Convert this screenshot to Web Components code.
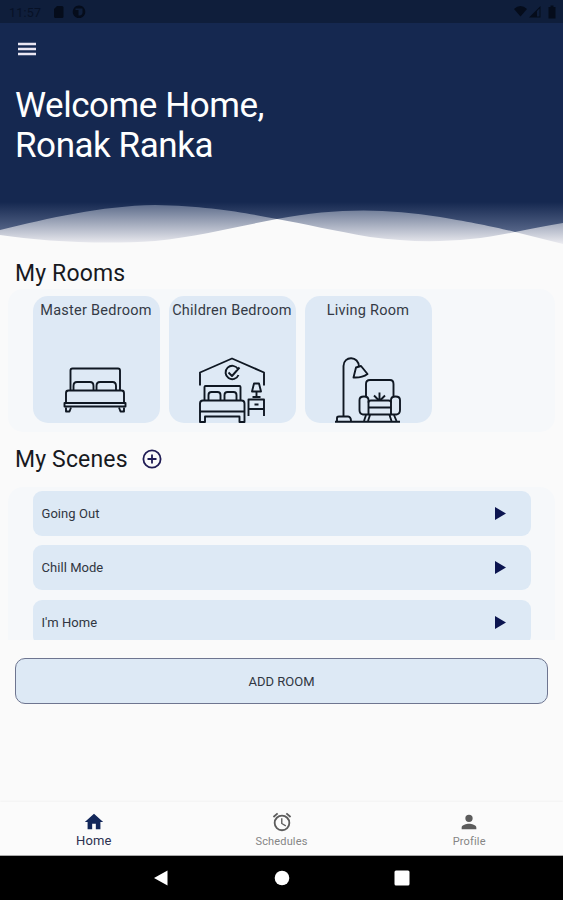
<!DOCTYPE html>
<html lang="en">
<head>
<meta charset="utf-8">
<title>Smart Home</title>
<style>
  body {
    margin: 0;
    font-family: Roboto, "Liberation Sans", sans-serif;
    color: #17191e;
    background: #fafafa;
  }
</style>
</head>
<body>
<home-screen></home-screen>

<script>
class StatusBar extends HTMLElement {
  connectedCallback() {
    this.attachShadow({ mode: 'open' });
    this.shadowRoot.innerHTML = `
      <style>
        :host {
          display: flex;
          align-items: center;
          box-sizing: border-box;
          height: 23px;
          padding: 1px 7px 0 9px;
          background: #0f1e3b;
          color: #071126;
          font-size: 12.5px;
          letter-spacing: 0.2px;
        }
        svg { display: block; fill: #050c1b; }
        .time { width: 44px; }
        .right { margin-left: auto; }
      </style>
      <span class="time">11:57</span>
      <svg width="34" height="14" viewBox="0 0 34 14">
        <path d="M4 1h5q1.500 0 1.500 1.500v9q0 1.500-1.500 1.500H2.500Q1 13 1 11.500V4z"/>
        <path fill-rule="evenodd" d="M26 .5a6.300 6.300 0 1 0 .01 0zM22.500 3.500h7v3.500a3 3 0 0 1-3 3.500h-1V5h-3z"/>
      </svg>
      <svg class="right" width="42" height="14" viewBox="0 0 42 14">
        <path d="M0 4Q6.500-2 13 4L6.500 11.500z"/>
        <path d="M15 12.500L26.500 1v11.500zM23 6v5.500h2.500V3.500z" fill-rule="evenodd"/>
        <path d="M34.500 2h2V.5h3V2h2v11.500h-7z"/>
      </svg>
    `;
  }
}
customElements.define('status-bar', StatusBar);

class WelcomeHeader extends HTMLElement {
  connectedCallback() {
    this.attachShadow({ mode: 'open' });
    this.shadowRoot.innerHTML = `
      <style>
        :host {
          display: flex;
          flex-direction: column;
          height: 227px;
          background: #152850;
          color: #fff;
        }
        .menu { display: block; margin: 19px 0 0 18px; }
        h1 {
          margin: 30px 0 0 15px;
          font-size: 35px;
          line-height: 40px;
          font-weight: 400;
          letter-spacing: -0.45px;
        }
        .wave { display: block; margin-top: auto; }
      </style>
      <svg class="menu" width="18" height="14" viewBox="0 0 18 14" fill="#e9e6f2">
        <path d="M0 .7h18v2.600H0zM0 5.700h18v2.600H0zM0 10.700h18v2.600H0z"/>
      </svg>
      <h1><slot></slot></h1>
      <svg class="wave" width="563" height="55" viewBox="0 195 563 55">
        <defs>
          <linearGradient id="deep" gradientUnits="userSpaceOnUse" x1="0" y1="202" x2="0" y2="236">
            <stop offset="0" stop-color="#152850"/>
            <stop offset="1" stop-color="#5f6e90"/>
          </linearGradient>
          <linearGradient id="mist" gradientUnits="userSpaceOnUse" x1="0" y1="204" x2="0" y2="244">
            <stop offset="0" stop-color="#5c6b8a"/>
            <stop offset="1" stop-color="#ececf1"/>
          </linearGradient>
        </defs>
        <rect y="195" width="563" height="55" fill="#fafafa"/>
        <path fill="url(#mist)" d="M0 195H563V223C540 227 528 229 515 232C470 242 420 244 370 237C335 231 305 224 277 219C235 227 200 236 155 241C100 245 40 241 0 235z"/>
        <path fill="url(#mist)" d="M277 219C335 208 385 208 440 217C475 223 495 227 515 232L563 244V195H277z"/>
        <path fill="url(#deep)" d="M0 195H563V223C545 226 530 229 515 232C495 227 475 223 440 217C385 208 335 208 277 219C245 213 210 206 155 205C100 206 50 218 0 230z"/>
      </svg>
    `;
  }
}
customElements.define('welcome-header', WelcomeHeader);

class SectionTitle extends HTMLElement {
  connectedCallback() {
    this.attachShadow({ mode: 'open' });
    this.shadowRoot.innerHTML = `
      <style>
        :host {
          display: flex;
          align-items: center;
          gap: 14px;
          height: 30px;
          padding-left: 15px;
        }
        h2 {
          margin: 0;
          padding-top: 2px;
          font-size: 23px;
          font-weight: 400;
          line-height: 28px;
          letter-spacing: 0.15px;
        }
      </style>
      <h2><slot></slot></h2>
      <slot name="action"></slot>
    `;
  }
}
customElements.define('section-title', SectionTitle);

class AddButton extends HTMLElement {
  connectedCallback() {
    this.attachShadow({ mode: 'open' });
    this.shadowRoot.innerHTML = `
      <style>
        :host { display: block; }
        svg { display: block; }
      </style>
      <svg width="20" height="20" viewBox="0 0 20 20" fill="none" stroke="#201c55" stroke-width="1.800">
        <circle cx="10" cy="10" r="8.600"/>
        <path d="M10 5.500v9M5.500 10h9"/>
      </svg>
    `;
  }
}
customElements.define('add-button', AddButton);

const ROOM_ICONS = {
  bed: `
    <path d="M7.500 33V13.500Q7.500 11.500 9.500 11.500H55Q57 11.500 57 13.500V33"/>
    <path d="M10.500 33V29Q10.500 25 14 25H27Q30.500 25 30.500 29V33M33.500 33V29Q33.500 25 37 25H49.500Q53 25 53 29V33"/>
    <path d="M3 46V36Q3 33.500 5.500 33.500H58.500Q61 33.500 61 36V46M1.500 46H62.500V49.500H1.500z"/>
    <path d="M3 50.500V54.500H6.500L8 50.500M61 50.500V54.500H57.500L56 50.500"/>`,
  kids: `
    <path d="M1 28.500V15.500L33 1.500L65 15.500V28.500"/>
    <path d="M39 12A6.700 6.700 0 1 0 39.500 18M29.500 15.500L33 19L40.500 10.500"/>
    <path d="M5.500 44V30Q5.500 29 6.500 29H40.500Q41.500 29 41.500 30V44"/>
    <path d="M9.500 43V38Q9.500 35 12.500 35H18.500Q21.500 35 21.500 38V43M25.500 43V38Q25.500 35 28.500 35H34.500Q37.500 35 37.500 38V43"/>
    <path d="M1 65V46.500Q1 43.500 4 43.500H42.500Q45.500 43.500 45.500 46.500V65H40.500V59.500H6V65zM1 54.500H45.500"/>
    <path d="M55 26.500H60L62 34.500H53zM57.500 34.500V40M53.500 40H61.500"/>
    <path d="M49.500 59V42.500H65V59M49.500 52H65M55.500 47.500H59.500"/>`,
  living: `
    <path d="M8.500 60V9C8.500-1.500 24-1.500 24 10"/>
    <path d="M21 10.500L26 9L32.500 17Q27 21 18.500 20.500z"/>
    <path d="M2 64V61Q2 59.500 4 59.500H13Q16 60 16 64M0 64.800H65"/>
    <path d="M31 39V27Q31 23 35 23H55Q58.500 23 58.500 27V39"/>
    <path d="M33.500 57.500V43Q33.500 39.500 29 39.500Q24.500 39.500 24.500 43V53Q24.500 57 28 57.500zM56 57.500V43Q56 39.500 60.500 39.500Q65 39.500 65 43V53Q65 57 61.500 57.500z"/>
    <path d="M33.500 45.500Q33.500 43.500 36 43.500H53.500Q56 43.500 56 45.500M33.500 50.500H56M33.500 57.500H56M31 58L29 64M35 58L33 64M54.500 58L56.500 64M59 58L61.500 64"/>
    <path d="M44.500 43V35.500M43.500 43L39 38.500M45.500 43L50 38.500"/>`
};

class RoomCard extends HTMLElement {
  connectedCallback() {
    this.attachShadow({ mode: 'open' });
    this.shadowRoot.innerHTML = `
      <style>
        :host {
          display: flex;
          flex-direction: column;
          align-items: center;
          justify-content: space-between;
          width: 127px;
          height: 127px;
          border-radius: 15px;
          background: #dee9f5;
          overflow: hidden;
        }
        .name {
          margin-top: 6px;
          font-size: 14.500px;
          line-height: 18px;
          letter-spacing: 0.25px;
          white-space: nowrap;
          color: #343a45;
        }
        svg { display: block; margin-right: 1px; }
      </style>
      <span class="name"><slot></slot></span>
      <svg width="66" height="66" viewBox="0 0 66 66" fill="none" stroke="#0f1722" stroke-width="1.900" stroke-linejoin="round">
        ${ROOM_ICONS[this.getAttribute('icon')]}
      </svg>
    `;
  }
}
customElements.define('room-card', RoomCard);

class RoomList extends HTMLElement {
  connectedCallback() {
    this.attachShadow({ mode: 'open' });
    this.shadowRoot.innerHTML = `
      <style>
        :host {
          display: flex;
          gap: 9px;
          box-sizing: border-box;
          height: 143px;
          margin: 1px 8px 0;
          padding: 7px 25px 9px 24.500px;
          border-radius: 15px;
          background: #f6f8fa;
        }
      </style>
      <slot></slot>
    `;
  }
}
customElements.define('room-list', RoomList);

class SceneRow extends HTMLElement {
  connectedCallback() {
    this.attachShadow({ mode: 'open' });
    this.shadowRoot.innerHTML = `
      <style>
        :host {
          display: flex;
          flex: none;
          align-items: center;
          justify-content: space-between;
          box-sizing: border-box;
          height: 45px;
          padding: 0 25px 0 9px;
          border-radius: 9px;
          background: #dde9f5;
          color: #303641;
          font-size: 13px;
          letter-spacing: 0.05px;
        }
        svg { display: block; }
      </style>
      <slot></slot>
      <svg width="11" height="13" viewBox="0 0 11 13"><path fill="#0c1550" d="M0 0L11 6.500L0 13z"/></svg>
    `;
  }
}
customElements.define('scene-row', SceneRow);

class SceneList extends HTMLElement {
  connectedCallback() {
    this.attachShadow({ mode: 'open' });
    this.shadowRoot.innerHTML = `
      <style>
        :host {
          display: flex;
          flex-direction: column;
          gap: 9.400px;
          box-sizing: border-box;
          height: 153px;
          margin: 13px 8px 0;
          padding: 4px 24.500px 0;
          border-radius: 15px 15px 0 0;
          background: #f6f8fa;
          overflow: hidden;
        }
      </style>
      <slot></slot>
    `;
  }
}
customElements.define('scene-list', SceneList);

class OutlineButton extends HTMLElement {
  connectedCallback() {
    this.attachShadow({ mode: 'open' });
    this.shadowRoot.innerHTML = `
      <style>
        :host { display: block; margin: 18px 15px 0; }
        button {
          display: block;
          width: 100%;
          height: 46px;
          padding: 0;
          border: 1px solid #6e7590;
          border-radius: 10px;
          background: #dde9f5;
          color: #303641;
          font: 400 13px Roboto, "Liberation Sans", sans-serif;
        }
      </style>
      <button><slot></slot></button>
    `;
  }
}
customElements.define('outline-button', OutlineButton);

const TAB_ICONS = {
  home: '<path d="M10 20v-6h4v6h5v-8h3L12 3 2 12h3v8z"/>',
  alarm: '<path d="M22 5.720l-4.600-3.860-1.290 1.530 4.600 3.860L22 5.720zM7.880 3.390L6.600 1.860 2 5.710l1.290 1.530 4.590-3.850zM12.500 8H11v6l4.750 2.850.75-1.230-4-2.370V8zM12 4a9 9 0 1 0 0 18 9 9 0 0 0 0-18zm0 16a7 7 0 1 1 0-14 7 7 0 0 1 0 14z"/>',
  person: '<path d="M12 12a4 4 0 1 0 0-8 4 4 0 0 0 0 8zm0 2c-2.670 0-8 1.340-8 4v2h16v-2c0-2.660-5.330-4-8-4z"/>'
};

class TabItem extends HTMLElement {
  connectedCallback() {
    this.attachShadow({ mode: 'open' });
    this.shadowRoot.innerHTML = `
      <style>
        :host {
          display: flex;
          flex: 1;
          flex-direction: column;
          align-items: center;
          padding-top: 9px;
          color: #858585;
          font-size: 11px;
          line-height: 17px;
        }
        :host([active]) { color: #2c3150; font-size: 13px; }
        svg { display: block; fill: #5c5c5c; }
        :host([active]) svg { fill: #13275a; }
        span { letter-spacing: 0.15px; }
        :host([active]) span { margin-top: -1px; }
      </style>
      <svg width="22" height="22" viewBox="0 0 24 24">${TAB_ICONS[this.getAttribute('icon')]}</svg>
      <span><slot></slot></span>
    `;
  }
}
customElements.define('tab-item', TabItem);

class TabBar extends HTMLElement {
  connectedCallback() {
    this.attachShadow({ mode: 'open' });
    this.shadowRoot.innerHTML = `
      <style>
        :host {
          display: flex;
          box-sizing: border-box;
          height: 54px;
          margin-top: auto;
          border-bottom: 1px solid #aaa;
          background: #fbfbfb;
          box-shadow: 0 -1px 2px rgba(0, 0, 0, 0.03);
        }
      </style>
      <slot></slot>
    `;
  }
}
customElements.define('tab-bar', TabBar);

class SystemNav extends HTMLElement {
  connectedCallback() {
    this.attachShadow({ mode: 'open' });
    this.shadowRoot.innerHTML = `
      <style>
        :host {
          display: flex;
          align-items: center;
          justify-content: center;
          gap: 104px;
          height: 44px;
          background: #000;
        }
        svg { display: block; fill: #fff; }
      </style>
      <svg width="16" height="16" viewBox="0 0 16 16"><path d="M0 8L13.500.5v15z"/></svg>
      <svg width="16" height="16" viewBox="0 0 16 16"><circle cx="8" cy="8" r="7.300"/></svg>
      <svg width="16" height="16" viewBox="0 0 16 16"><rect x=".5" y=".5" width="15" height="15" rx="1.500"/></svg>
    `;
  }
}
customElements.define('system-nav', SystemNav);

class HomeScreen extends HTMLElement {
  connectedCallback() {
    this.attachShadow({ mode: 'open' });
    this.shadowRoot.innerHTML = `
      <style>
        :host {
          display: flex;
          flex-direction: column;
          width: 563px;
          height: 900px;
          background: #fafafa;
          overflow: hidden;
        }
        .rooms { margin-top: 8px; }
        .scenes { margin-top: 12px; }
      </style>
      <status-bar></status-bar>
      <welcome-header>Welcome Home,<br>Ronak Ranka</welcome-header>
      <section-title class="rooms">My Rooms</section-title>
      <room-list>
        <room-card icon="bed">Master Bedroom</room-card>
        <room-card icon="kids">Children Bedroom</room-card>
        <room-card icon="living">Living Room</room-card>
      </room-list>
      <section-title class="scenes">My Scenes<add-button slot="action"></add-button></section-title>
      <scene-list>
        <scene-row>Going Out</scene-row>
        <scene-row>Chill Mode</scene-row>
        <scene-row>I'm Home</scene-row>
      </scene-list>
      <outline-button>ADD ROOM</outline-button>
      <tab-bar>
        <tab-item icon="home" active>Home</tab-item>
        <tab-item icon="alarm">Schedules</tab-item>
        <tab-item icon="person">Profile</tab-item>
      </tab-bar>
      <system-nav></system-nav>
    `;
  }
}
customElements.define('home-screen', HomeScreen);
</script>
</body>
</html>
